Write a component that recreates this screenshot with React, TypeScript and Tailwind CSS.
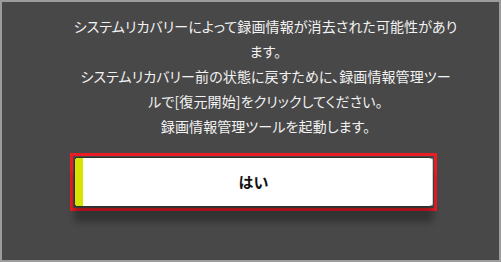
export default function App() {
  const lines = [
    'システムリカバリーによって録画情報が消去された可能性があり',
    'ます。',
    'システムリカバリー前の状態に戻すために、録画情報管理ツー',
    'ルで[復元開始]をクリックしてください。',
    '録画情報管理ツールを起動します。',
  ]

  return (
    <div
      className="h-[262px] w-[501px] overflow-hidden border-2 border-[#9c9c9c] bg-[#484848] text-[#f2f2f2]"
      style={{ fontFamily: '"Noto Sans CJK JP", "Noto Sans", sans-serif' }}
    >
      <div className="flex flex-col items-center pt-[12px]">
        <div className="ml-[30px] text-center text-[14px] leading-[25px] tracking-[0.1px] [font-feature-settings:'palt']">
          {lines.map((line) => (
            <p key={line} className="whitespace-nowrap">
              {line}
            </p>
          ))}
        </div>

        <div className="mt-[14px] ml-[6px] border-[3px] border-[#ec1c24] p-px">
          <button
            type="button"
            className="relative flex h-[50px] w-[359px] items-center justify-center overflow-hidden rounded-[4px] border border-[#2e2e2e] border-r-[#cfcfcf] bg-white shadow-[0_15px_7px_rgba(0,0,0,0.3)]"
          >
            <span className="absolute inset-y-0 left-0 w-[8px] bg-[#d6e400]" />
            <span className="text-[15px] font-bold text-[#111]">はい</span>
          </button>
        </div>
      </div>
    </div>
  )
}
